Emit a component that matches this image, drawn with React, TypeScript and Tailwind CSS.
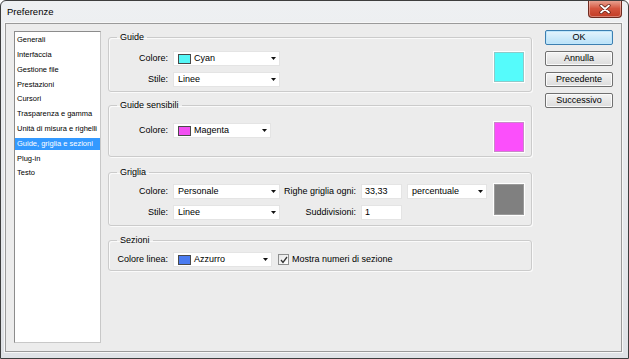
import React from "react";

const items = [
  "Generali",
  "Interfaccia",
  "Gestione file",
  "Prestazioni",
  "Cursori",
  "Trasparenza e gamma",
  "Unità di misura e righelli",
  "Guide, griglia e sezioni",
  "Plug-in",
  "Testo",
];

function Arrow() {
  return (
    <svg width="5" height="3" viewBox="0 0 5 3" className="shrink-0">
      <path d="M0 0H5L2.5 3Z" fill="#111" />
    </svg>
  );
}

function Select({
  w,
  swatch,
  text,
}: {
  w: string;
  swatch?: string;
  text: string;
}) {
  return (
    <div
      className={`${w} h-[15px] bg-white border border-[#e4e4e4] flex items-center pl-[4px] pr-[3px] shrink-0`}
    >
      {swatch && (
        <span className={`${swatch} w-[13px] h-[10px] border border-[#4a4a4a] mr-[3px] shrink-0`} />
      )}
      <span className="flex-1 leading-[13px] whitespace-nowrap">{text}</span>
      <Arrow />
    </div>
  );
}

function Label({ children, w = "w-[64px]" }: { children: React.ReactNode; w?: string }) {
  return (
    <span className={`${w} text-right pr-[5px] whitespace-nowrap shrink-0 leading-[15px]`}>
      {children}
    </span>
  );
}

function Input({ value }: { value: string }) {
  return (
    <div className="w-[41px] h-[15px] bg-white border border-[#e4e4e4] pl-[3px] leading-[13px] shrink-0">
      {value}
    </div>
  );
}

function Group({
  title,
  className,
  children,
}: {
  title: string;
  className: string;
  children: React.ReactNode;
}) {
  return (
    <fieldset
      className={`${className} border border-[#cbcbcb] rounded-[3px] min-w-0 shadow-[inset_1px_1px_0_#fafafa,1px_1px_0_#fafafa]`}
    >
      <legend className="ml-[8px] px-[3px] leading-[11px] text-[9px]">{title}</legend>
      {children}
    </fieldset>
  );
}

function Button({ children, primary }: { children: React.ReactNode; primary?: boolean }) {
  return (
    <div
      className={
        primary
          ? "h-[15px] rounded-[2px] border border-[#3c7fb1] bg-gradient-to-b from-[#e5f4fc] to-[#b9e1f8] shadow-[inset_0_0_0_1px_#bfe6fb] flex items-center justify-center leading-[13px]"
          : "h-[15px] rounded-[2px] border border-[#707070] bg-gradient-to-b from-[#f4f4f4] to-[#dcdcdc] shadow-[inset_0_0_0_1px_#fbfbfb] flex items-center justify-center leading-[13px]"
      }
    >
      {children}
    </div>
  );
}

export default function App() {
  return (
    <div className="w-[629px] h-[359px] bg-gradient-to-b from-[#eef0f2] to-[#dfe2e6] border border-[#3e3e3e] rounded-t-[6px] flex flex-col overflow-hidden font-['Liberation_Sans',Arial,sans-serif] text-[9px] text-black">
      {/* Title bar */}
      <div className="h-[22px] flex items-start justify-between pl-[6px] pr-[6px] shrink-0">
        <span className="mt-[5px] text-[9.5px] leading-[11px]">Preferenze</span>
        <div className="-mt-[1px] w-[34px] h-[18px] rounded-b-[4px] border border-[#6e2a1f] border-t-0 bg-gradient-to-b from-[#e9a99a] via-[#d4553f] to-[#c23c25] shadow-[inset_0_0_0_1px_rgba(255,255,255,0.35)] flex items-center justify-center">
          <svg width="12" height="10" viewBox="0 0 12 10">
            <path d="M2 1.5L10 8.5M10 1.5L2 8.5" stroke="#5a1a10" strokeWidth="3.2" strokeLinecap="round" />
            <path d="M2 1.5L10 8.5M10 1.5L2 8.5" stroke="#ffffff" strokeWidth="1.8" strokeLinecap="round" />
          </svg>
        </div>
      </div>

      {/* Client area */}
      <div className="flex-1 ml-[4px] mr-[6px] mb-[6px] border border-[#9a9a9a] bg-[#ececec] flex shadow-[0_0_0_1px_#f7f7f7]">
        {/* List */}
        <div className="ml-[8px] mt-[7px] w-[87px] h-[312px] bg-white border border-[#8c8c8c] border-r-[#c8c8c8] border-b-[#c8c8c8] shrink-0 pt-[1px]">
          {items.map((it) => (
            <div key={it} className="h-[14.78px] flex items-center">
              <div
                className={
                  it === "Guide, griglia e sezioni"
                    ? "w-full h-[12px] bg-[#3399ff] text-white pl-[2px] text-[7.5px] leading-[12px] whitespace-nowrap"
                    : "w-full h-[12px] pl-[2px] text-[7.5px] leading-[12px] whitespace-nowrap"
                }
              >
                {it}
              </div>
            </div>
          ))}
        </div>

        {/* Groups */}
        <div className="ml-[7px] w-[424px] pt-[8px] flex flex-col shrink-0">
          <Group title="Guide" className="">
            <div className="flex items-start pt-[8px] pb-[4px] pr-[7px]">
              <div className="flex-1 flex flex-col gap-[6px]">
                <div className="flex items-center">
                  <Label>Colore:</Label>
                  <Select w="w-[107px]" swatch="bg-[#55f7f7]" text="Cyan" />
                </div>
                <div className="flex items-center">
                  <Label>Stile:</Label>
                  <Select w="w-[107px]" text="Linee" />
                </div>
              </div>
              <div className="mt-[1px] w-[30px] h-[30px] bg-[#55fbfb] border border-[#8fc9c9] shadow-[0_0_0_1px_#ffffff]" />
            </div>
          </Group>

          <Group title="Guide sensibili" className="mt-[8px]">
            <div className="flex items-start pt-[11px] pb-[4px] pr-[7px]">
              <div className="flex-1 flex items-center mt-[1px]">
                <Label>Colore:</Label>
                <Select w="w-[98px]" swatch="bg-[#f24ff2]" text="Magenta" />
              </div>
              <div className="w-[30px] h-[30px] bg-[#fb4ffb] border border-[#c98ac9] shadow-[0_0_0_1px_#ffffff]" />
            </div>
          </Group>

          <Group title="Griglia" className="mt-[10px]">
            <div className="flex items-start pt-[6px] pb-[5px] pr-[7px]">
              <div className="flex-1 flex flex-col gap-[6px]">
                <div className="flex items-center">
                  <Label>Colore:</Label>
                  <Select w="w-[107px]" text="Personale" />
                  <Label w="w-[81px]">Righe griglia ogni:</Label>
                  <Input value="33,33" />
                  <div className="ml-[5px]">
                    <Select w="w-[80px]" text="percentuale" />
                  </div>
                </div>
                <div className="flex items-center">
                  <Label>Stile:</Label>
                  <Select w="w-[107px]" text="Linee" />
                  <Label w="w-[81px]">Suddivisioni:</Label>
                  <Input value="1" />
                </div>
              </div>
              <div className="w-[30px] h-[31px] bg-[#808080] border border-[#9a9a9a] shadow-[0_0_0_1px_#ffffff]" />
            </div>
          </Group>

          <Group title="Sezioni" className="mt-[9px]">
            <div className="flex items-center pt-[6px] pb-[3px]">
              <Label>Colore linea:</Label>
              <Select w="w-[99px]" swatch="bg-[#4a7bf0]" text="Azzurro" />
              <div className="ml-[6px] w-[11px] h-[11px] border border-[#8e8f8f] bg-gradient-to-br from-[#e6e6e6] to-[#ffffff] flex items-center justify-center shrink-0">
                <svg width="8" height="8" viewBox="0 0 8 8">
                  <path d="M1 4L3 6.5L7 1" stroke="#333" strokeWidth="1.3" fill="none" />
                </svg>
              </div>
              <span className="ml-[3px] whitespace-nowrap leading-[13px]">Mostra numeri di sezione</span>
            </div>
          </Group>
        </div>

        {/* Buttons */}
        <div className="ml-[13px] w-[68px] pt-[6px] flex flex-col gap-[6px] shrink-0">
          <Button primary>OK</Button>
          <Button>Annulla</Button>
          <Button>Precedente</Button>
          <Button>Successivo</Button>
        </div>
      </div>
    </div>
  );
}
